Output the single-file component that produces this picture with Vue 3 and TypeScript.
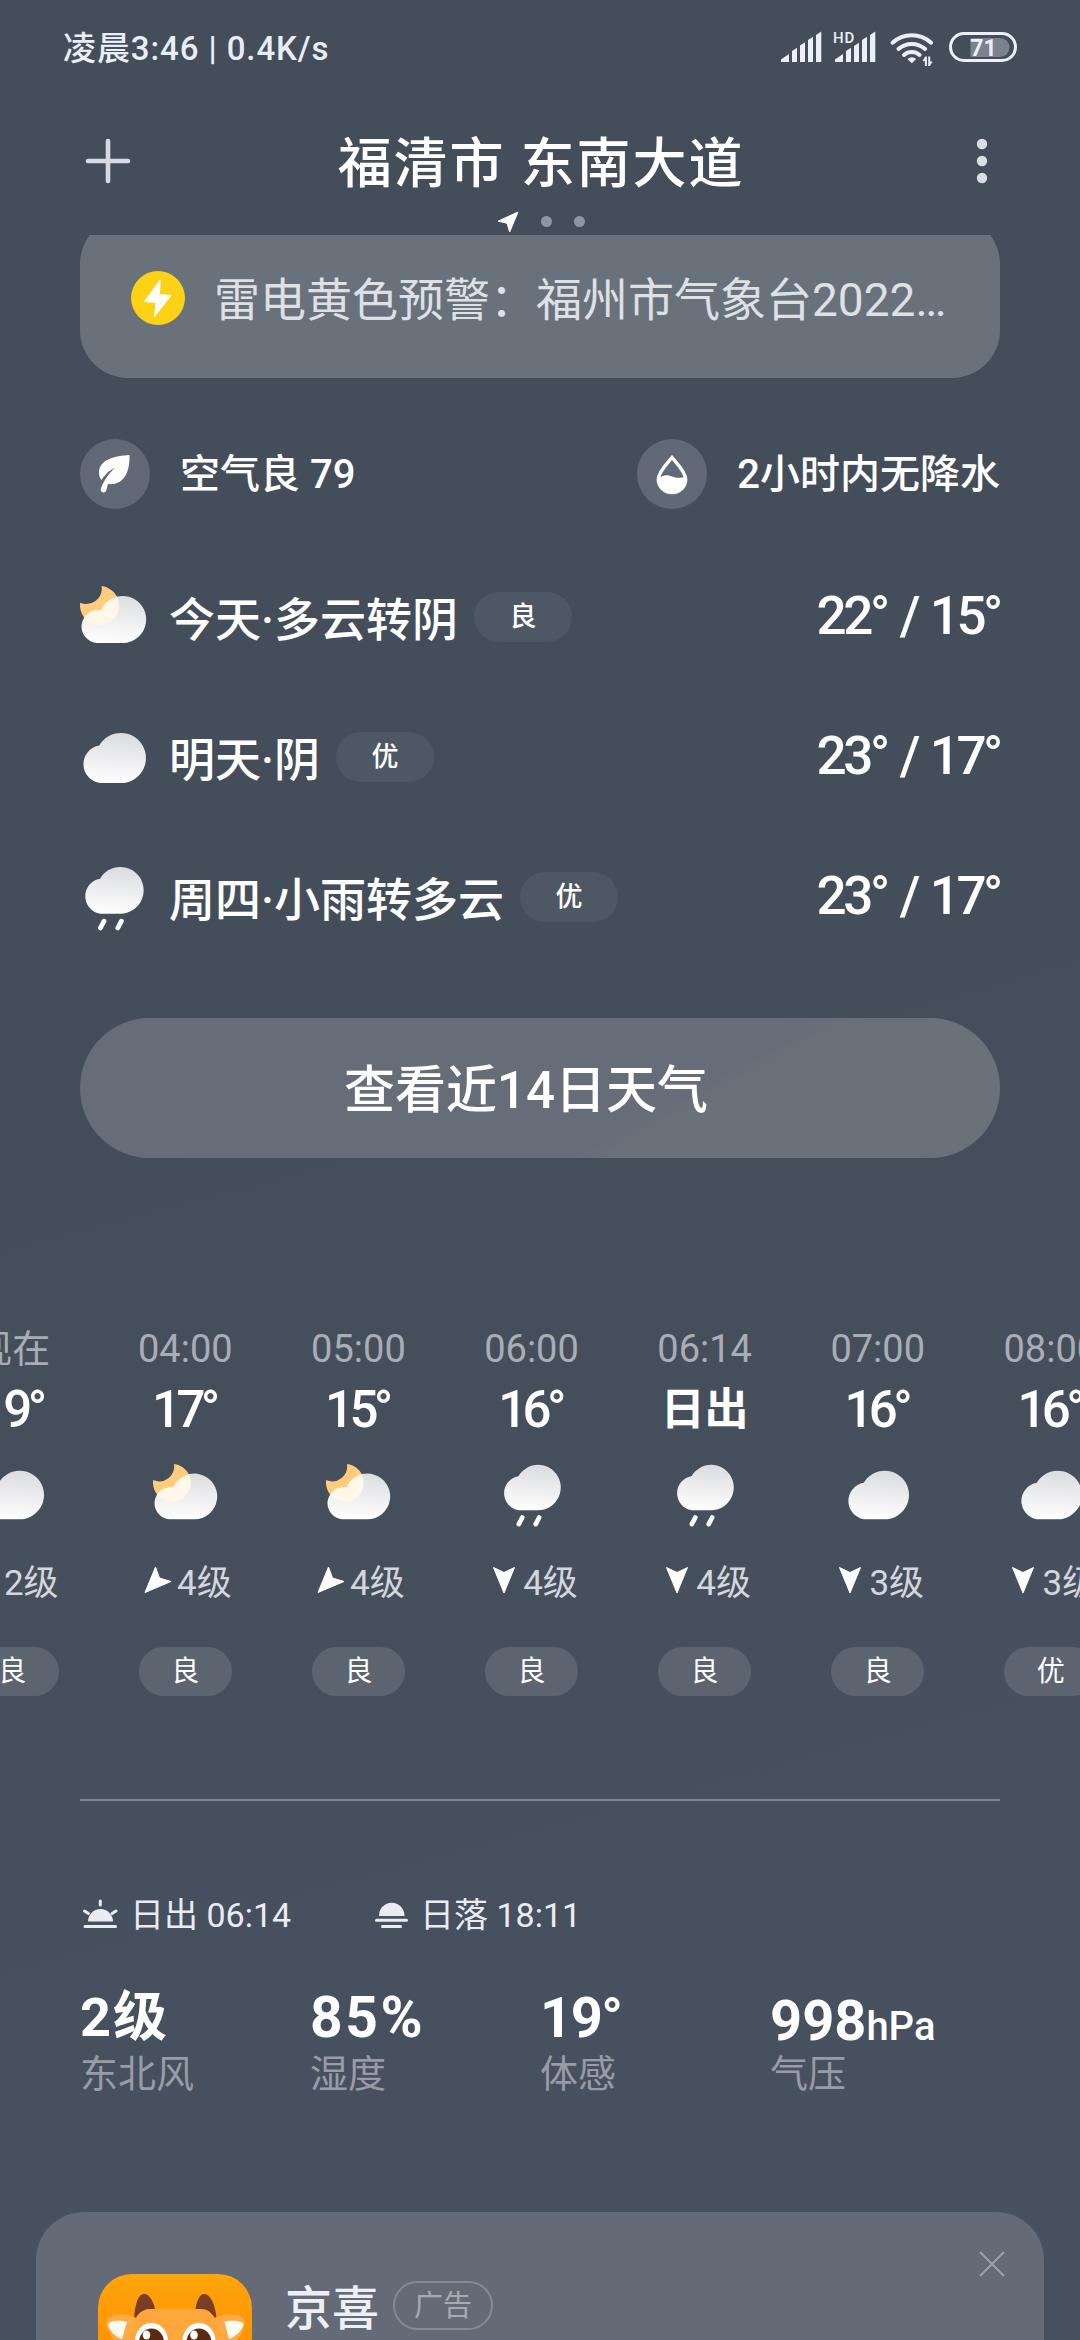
<script setup lang="ts">
type WeatherKind = 'moon' | 'cloud' | 'rain'

interface DayForecast {
  label: string
  icon: WeatherKind
  quality: string
  range: string
}

interface HourForecast {
  time: string
  value: string
  event?: boolean
  icon: WeatherKind
  wind: string
  direction: 'sw' | 's'
  quality: string
}

interface Stat {
  value: string
  unit?: string
  kind: 'force' | 'percent' | 'degree' | 'compound'
  label: string
}

const days: DayForecast[] = [
  { label: '今天·多云转阴', icon: 'moon', quality: '良', range: '22° / 15°' },
  { label: '明天·阴', icon: 'cloud', quality: '优', range: '23° / 17°' },
  { label: '周四·小雨转多云', icon: 'rain', quality: '优', range: '23° / 17°' },
]

const hours: HourForecast[] = [
  { time: '现在', value: '19°', icon: 'cloud', wind: '2级', direction: 'sw', quality: '良' },
  { time: '04:00', value: '17°', icon: 'moon', wind: '4级', direction: 'sw', quality: '良' },
  { time: '05:00', value: '15°', icon: 'moon', wind: '4级', direction: 'sw', quality: '良' },
  { time: '06:00', value: '16°', icon: 'rain', wind: '4级', direction: 's', quality: '良' },
  { time: '06:14', value: '日出', event: true, icon: 'rain', wind: '4级', direction: 's', quality: '良' },
  { time: '07:00', value: '16°', icon: 'cloud', wind: '3级', direction: 's', quality: '良' },
  { time: '08:00', value: '16°', icon: 'cloud', wind: '3级', direction: 's', quality: '优' },
]

const stats: Stat[] = [
  { value: '2级', kind: 'force', label: '东北风' },
  { value: '85%', kind: 'percent', label: '湿度' },
  { value: '19°', kind: 'degree', label: '体感' },
  { value: '998', unit: 'hPa', kind: 'compound', label: '气压' },
]
</script>

<template>
  <div class="screen">
    <svg class="sprite" width="0" height="0" aria-hidden="true">
      <defs>
        <linearGradient id="cloud-fill" gradientUnits="userSpaceOnUse" x1="38" y1="10" x2="34" y2="60">
          <stop offset="0" stop-color="#dbdcdf" />
          <stop offset="1" stop-color="#fefefe" />
        </linearGradient>
        <clipPath id="moon-cloud-clip">
          <path d="M17 60A16.5 16.5 0 1 1 21 27.3A23.5 23.5 0 1 1 42.5 60Z" />
        </clipPath>
        <symbol id="w-cloud" viewBox="0 0 68 68">
          <path d="M19.5 60A19 19 0 0 1 19.3 22.5A25 25 0 1 1 41 60Z" fill="url(#cloud-fill)" />
        </symbol>
        <symbol id="w-moon" viewBox="0 0 68 68">
          <path d="M21.6 3.1A19.5 19.5 0 1 1 .2 19.7A15.5 15.5 0 0 0 21.6 3.1Z" fill="#ffcb7c" />
          <path d="M17 60A16.5 16.5 0 1 1 21 27.3A23.5 23.5 0 1 1 42.5 60Z" fill="url(#cloud-fill)" />
          <circle cx="19.5" cy="22.5" r="19.5" fill="#fff7e8" clip-path="url(#moon-cloud-clip)" />
        </symbol>
        <symbol id="w-rain" viewBox="0 0 68 68">
          <path transform="translate(2 -5.4) scale(.935)" d="M19.5 60A19 19 0 0 1 19.3 22.5A25 25 0 1 1 41 60Z" fill="url(#cloud-fill)" />
          <path d="M24 58.2L20.4 65M41.4 58.2L37.800 65" stroke="#fff" stroke-width="4.8" stroke-linecap="round" />
        </symbol>
      </defs>
    </svg>

    <div class="status">
      <span class="status-text">凌晨3:46 | 0.4K/s</span>
      <svg width="238" height="38" viewBox="0 0 238 38">
        <g fill="#eceff8">
          <path d="M1 33v-2.500l8-5.500v8zM12 33V22l5-3.200V33zM20 33V16.500l5-3.300V33zM28 33V11l5-3.300V33zM36 33V6l5.300-3.500V33z" />
          <path d="M55 33v-2.500l8-5.500v8zM66 33V22l5-3.200V33zM74 33V17l5-3.300V33zM82 33V11l5-3.300V33zM90 33V6l5.300-3.500V33z" />
          <path d="M131.800 34.200l-4.300-4.100a6.200 6.200 0 0 1 8.600 0z" />
        </g>
        <g fill="none" stroke="#eceff8" stroke-width="4" stroke-linecap="round">
          <path d="M112.500 13.700a28.500 28.500 0 0 1 38.600 0" />
          <path d="M118.500 20a20 20 0 0 1 26.600 0" />
          <path d="M124 26a12 12 0 0 1 15.600 0" />
        </g>
        <path d="M145.800 37v-9l-3 4.200M149 28v9l3-4.200" fill="none" stroke="#444e5a" stroke-width="5" />
        <path d="M145.900 27.500v9.500M145.900 28.500l-2.500 3.500M149.200 37v-9.500M149.200 36l2.500-3.500" fill="none" stroke="#eceff8" stroke-width="2" />
        <text x="53" y="13.500" class="hd">HD</text>
        <path d="M190.500 9h29.500a9.500 9.500 0 0 1 9.500 9.500v0a9.500 9.500 0 0 1-9.500 9.500h-29.500z" fill="#7a828b" />
        <rect x="170.500" y="4.500" width="65" height="27" rx="13.500" fill="none" stroke="#eceff8" stroke-width="3" />
        <text x="203.500" y="26.500" class="battery">71</text>
      </svg>
    </div>

    <header class="header">
      <svg width="46" height="46" viewBox="0 0 46 46">
        <path d="M23 3v40M3 23h40" stroke="#d6dae2" stroke-width="4.600" stroke-linecap="round" />
      </svg>
      <h1>福清市 东南大道</h1>
      <svg width="46" height="46" viewBox="0 0 46 46" fill="#dadde3">
        <circle cx="23" cy="6" r="5.200" />
        <circle cx="23" cy="23" r="5.200" />
        <circle cx="23" cy="40" r="5.200" />
      </svg>
    </header>

    <div class="pager">
      <svg width="22" height="22" viewBox="0 0 22 22">
        <path d="M21 1L1 10.200L10 12.200L12.700 21Z" fill="#fff" stroke="#fff" stroke-width="1" stroke-linejoin="round" />
      </svg>
      <i></i>
      <i></i>
    </div>

    <main class="scroll">
      <section class="alert">
        <svg width="54" height="54" viewBox="0 0 54 54">
          <circle cx="27" cy="27" r="27" fill="#fcd116" />
          <path d="M29.200 9L13.500 30.500L25 31.500L23.500 45.500L40 24.500L28.500 23.500Z" fill="#fff" stroke="#fff" stroke-width="1" stroke-linejoin="round" />
        </svg>
        <span class="alert-text">雷电黄色预警：福州市气象台2022…</span>
      </section>

      <section class="air">
        <div class="chip">
          <svg width="70" height="70" viewBox="0 0 70 70">
            <circle cx="35" cy="35" r="35" fill="#616976" />
            <path d="M49.500 16C35 16.500 19 21 19 33.500C19 36.500 20 39 21.500 41C25 35.500 29 31.500 35.500 28.500C30 33 24 40.500 20.800 50C20 53.500 25 55 26.200 51.500L28 45C42 46.500 50 36 49.500 16Z" fill="#fff" />
          </svg>
          <span>空气良 79</span>
        </div>
        <div class="chip">
          <svg width="70" height="70" viewBox="0 0 70 70">
            <circle cx="35" cy="35" r="35" fill="#616976" />
            <path d="M35 18.500C30 24.500 21.300 33 21.300 40.500A13.700 13 0 0 0 48.700 40.500C48.700 33 40 24.500 35 18.500Z" fill="none" stroke="#fff" stroke-width="3.400" />
            <path d="M21 40C26 35.500 30 35.500 35 37.500C40 39.500 44 39 49 37.500V40.500A14 13.500 0 0 1 21 40.500Z" fill="#fff" />
          </svg>
          <span>2小时内无降水</span>
        </div>
      </section>

      <section class="days">
        <div v-for="day in days" :key="day.label" class="day">
          <svg width="68" height="68"><use :href="'#w-' + day.icon" /></svg>
          <span class="day-label">{{ day.label }}</span>
          <span class="day-quality">{{ day.quality }}</span>
          <span class="day-range">{{ day.range }}</span>
        </div>
      </section>

      <button class="more" type="button">查看近14日天气</button>

      <section class="hours">
        <div v-for="hour in hours" :key="hour.time" class="hour">
          <span class="hour-time">{{ hour.time }}</span>
          <span class="hour-value" :class="{ event: hour.event }">{{ hour.value }}</span>
          <svg class="hour-icon" width="66" height="66"><use :href="'#w-' + hour.icon" /></svg>
          <div class="wind">
            <svg width="28" height="28" viewBox="0 0 28 28">
              <path v-if="hour.direction === 'sw'" d="M1 26.500L11.500 1L15.500 12L27 15.500Z" fill="#fff" stroke="#fff" stroke-width="1" stroke-linejoin="round" />
              <path v-else d="M14 27L3.500 1.500L14 6.500L24.500 1.500Z" fill="#fff" stroke="#fff" stroke-width="1" stroke-linejoin="round" />
            </svg>
            <span>{{ hour.wind }}</span>
          </div>
          <span class="hour-quality">{{ hour.quality }}</span>
        </div>
      </section>

      <div class="divider"></div>

      <section class="sun">
        <div class="sun-item">
          <svg width="38" height="30" viewBox="0 0 38 30">
            <path d="M7 22.500a12.500 12.500 0 0 1 25 0z" fill="#e9edf2" />
            <path d="M4 27.500h30.500M19.300 2v4M3.500 12l4 2.500M35 12l-4 2.500" stroke="#e9edf2" stroke-width="3" stroke-linecap="round" />
          </svg>
          <span>日出 06:14</span>
        </div>
        <div class="sun-item">
          <svg width="38" height="30" viewBox="0 0 38 30">
            <path d="M8 17a12.500 13 0 0 1 25.500 0z" fill="#e9edf2" />
            <path d="M5.500 21.300h30M11.500 27.500h18" stroke="#e9edf2" stroke-width="3" stroke-linecap="round" />
          </svg>
          <span>日落 18:11</span>
        </div>
      </section>

      <section class="stats">
        <div v-for="stat in stats" :key="stat.label" class="stat">
          <span class="stat-value" :class="stat.kind">{{ stat.value }}<small v-if="stat.unit">{{ stat.unit }}</small></span>
          <span class="stat-label">{{ stat.label }}</span>
        </div>
      </section>

      <section class="ad">
        <svg width="154" height="154" viewBox="0 0 154 154">
          <defs>
            <linearGradient id="logo-bg" x1="0" y1="0" x2="0" y2="1">
              <stop offset="0" stop-color="#ffa50a" />
              <stop offset="1" stop-color="#ff7e00" />
            </linearGradient>
          </defs>
          <rect width="154" height="154" rx="34" fill="url(#logo-bg)" />
          <path d="M36 45C37 30 40 20 46 20C52 20 56 28 58 40Z" fill="#7a3d25" />
          <path d="M118.500 45C117.500 30 112 20 106.500 20C101 20 98 28 97 40Z" fill="#7a3d25" />
          <path d="M8 48C10 38 30 38 42 46L36 76C20 74 9 60 8 48Z" fill="#ffab45" />
          <path d="M147 48C145 38 125 38 113 46L119 76C135 74 146 60 147 48Z" fill="#ffab45" />
          <path d="M10 50C12 46 24 46 29 48L24 65C16 62 11 56 10 50Z" fill="#fffaf0" />
          <path d="M145.500 50C143.500 46 131.500 46 126.500 48L131 65C139 62 144.500 56 145.500 50Z" fill="#fffaf0" />
          <path d="M26 90V64C34 62 34 35 52 35H103C120 35 120 60 129 64V90Z" fill="#ffa63c" />
          <ellipse cx="53.500" cy="67" rx="16.500" ry="18" fill="#fff" />
          <ellipse cx="101" cy="67" rx="16.500" ry="18" fill="#fff" />
          <ellipse cx="53.500" cy="68" rx="12.500" ry="13.500" fill="#5a2a17" />
          <ellipse cx="101" cy="68" rx="12.500" ry="13.500" fill="#5a2a17" />
          <ellipse cx="48.500" cy="61" rx="3.800" ry="4.500" fill="#fff" />
          <ellipse cx="96" cy="61" rx="3.800" ry="4.500" fill="#fff" />
        </svg>
        <span class="ad-name">京喜</span>
        <span class="ad-tag">广告</span>
        <svg class="ad-close" width="26" height="26" viewBox="0 0 26 26">
          <path d="M1 1l24 24M25 1L1 25" stroke="#9ba0a9" stroke-width="2" />
        </svg>
      </section>
    </main>
  </div>
</template>

<style>
html,
body {
  margin: 0;
  background: #444e5a;
}
</style>

<style scoped>
.screen {
  display: flex;
  flex-direction: column;
  width: 1080px;
  height: 2340px;
  overflow: hidden;
  color: #fff;
  background: linear-gradient(165deg, #444e5a 0%, #444e5a 40%, #485160 100%);
  font-family: Roboto, "Noto Sans CJK SC", sans-serif;
  line-height: 1.2;
  white-space: nowrap;
}

svg {
  display: block;
  flex: none;
}

.sprite {
  position: absolute;
}

.status {
  display: flex;
  flex: none;
  align-items: center;
  justify-content: space-between;
  height: 96px;
  padding: 0 62px 0 63px;
  color: #e9edf5;
}

.status-text {
  margin-top: 2px;
  font-size: 33px;
  font-weight: 500;
  letter-spacing: 0.9px;
}

.hd {
  fill: #eceff8;
  font-size: 15px;
  font-weight: 500;
  letter-spacing: 0.8px;
}

.battery {
  fill: #eceff8;
  font-size: 23px;
  font-weight: 700;
  text-anchor: middle;
}

.header {
  display: flex;
  flex: none;
  align-items: center;
  justify-content: space-between;
  height: 98px;
  margin-top: 16px;
  padding: 0 75px 0 85px;
}

h1 {
  margin: 7px 8px 0 0;
  font-size: 54px;
  font-weight: 500;
  letter-spacing: 1.9px;
  line-height: 70px;
}

.pager {
  display: flex;
  flex: none;
  align-items: center;
  height: 23px;
  padding: 0 0 2px 497px;
}

.pager i {
  width: 11px;
  height: 11px;
  margin-left: 22px;
  border-radius: 50%;
  background: #8f96a3;
}

.scroll {
  flex: 1;
  min-height: 0;
  overflow: hidden;
}

.alert {
  display: flex;
  align-items: center;
  gap: 29px;
  box-sizing: border-box;
  width: 920px;
  height: 162px;
  margin: -19px 80px 0;
  padding: 2px 0 0 51px;
  border-radius: 48px;
  background: #69717a;
  color: #dde0e5;
  font-size: 46px;
}

.alert-text {
  margin-top: 5px;
}

.air {
  display: flex;
  justify-content: space-between;
  height: 70px;
  margin: 61px 80px 0;
}

.chip {
  display: flex;
  align-items: center;
  gap: 30px;
  font-size: 40px;
  font-weight: 500;
}

.chip span {
  margin-top: 2px;
}

.days {
  margin: 38px 80px 0;
}

.day {
  display: flex;
  align-items: center;
  height: 140px;
}

.day-label {
  margin: 7px 16px 0 21px;
  font-size: 46px;
  font-weight: 500;
}

.day-quality {
  width: 98px;
  border-radius: 25px;
  background: #4e5764;
  font-size: 27px;
  font-weight: 500;
  line-height: 50px;
  text-align: center;
}

.day-range {
  margin-left: auto;
  font-size: 53px;
  font-weight: 500;
  letter-spacing: -3.4px;
  word-spacing: 3px;
}

.more {
  display: block;
  box-sizing: border-box;
  width: 920px;
  height: 140px;
  margin: 51px 80px 0;
  padding: 6px 28px 0 0;
  border: 0;
  border-radius: 70px;
  background: linear-gradient(151deg, #666d79 0%, #666d79 63%, #697179 67%, #697179 100%);
  color: #fff;
  font: inherit;
  font-size: 51px;
  font-weight: 500;
}

.hours {
  display: flex;
  width: 1212px;
  margin: 166px 0 0 -74.300px;
}

.hour {
  display: flex;
  flex: none;
  flex-direction: column;
  align-items: center;
  width: 173.100px;
}

.hour-time {
  color: #a8adb6;
  font-size: 38px;
  line-height: 50px;
}

.hour-value {
  margin-top: 6px;
  padding-right: 3px;
  font-size: 51px;
  font-weight: 500;
  letter-spacing: -4.6px;
  line-height: 60px;
}

.hour-value.event {
  padding: 0;
  font-size: 44px;
  font-weight: 700;
  letter-spacing: 0;
}

.hour-icon {
  margin: 21px 0 0 1px;
}

.wind {
  display: flex;
  align-items: center;
  gap: 5px;
  height: 44px;
  margin-top: 35px;
  padding-left: 5px;
  color: #d3d7dd;
  font-size: 35px;
}

.wind svg {
  margin-bottom: 9px;
}

.hour-quality {
  width: 93px;
  margin-top: 41px;
  border-radius: 25px;
  background: #5c6470;
  font-size: 28px;
  line-height: 49px;
  text-align: center;
}

.divider {
  height: 2px;
  margin: 103px 80px 0;
  background: #7f8791;
}

.sun {
  display: flex;
  height: 44px;
  margin: 91px 0 0 81px;
}

.sun-item {
  display: flex;
  align-items: center;
  gap: 11px;
  width: 290px;
  color: #e9edf2;
  font-size: 34px;
}

.sun-item span {
  margin-top: 2px;
}

.stats {
  display: flex;
  margin: 50px 0 0 80px;
}

.stat {
  display: flex;
  flex-direction: column;
  width: 230px;
}

.stat-value {
  height: 64px;
  font-size: 56px;
  font-weight: 700;
  line-height: 64px;
}

.stat-value.force {
  font-size: 54px;
  letter-spacing: 2px;
}

.stat-value.percent {
  font-size: 57px;
  letter-spacing: 2.5px;
}

.stat-value.degree {
  letter-spacing: -1.5px;
}

.stat-value.compound {
  padding-top: 3px;
  margin-bottom: -3px;
}

.stat-value small {
  font-size: 40px;
  font-weight: 500;
  line-height: 1;
}

.stat-label {
  margin-top: 1px;
  color: #979ca6;
  font-size: 38px;
  line-height: 46px;
}

.ad {
  display: flex;
  align-items: flex-start;
  box-sizing: border-box;
  width: 1008px;
  height: 360px;
  margin: 115px 36px 0;
  padding: 62px 39px 0 62px;
  border-radius: 48px;
  background: #646a76;
}

.ad-name {
  margin: 5px 14px 0 33px;
  color: #eceff4;
  font-size: 47px;
  font-weight: 500;
  line-height: 60px;
}

.ad-tag {
  box-sizing: border-box;
  width: 100px;
  height: 49px;
  margin-top: 7px;
  border: 2px solid #858b95;
  border-radius: 25px;
  color: #a6abb3;
  font-size: 29px;
  line-height: 46px;
  text-align: center;
}

.ad-close {
  margin: -23px 0 0 auto;
}
</style>
